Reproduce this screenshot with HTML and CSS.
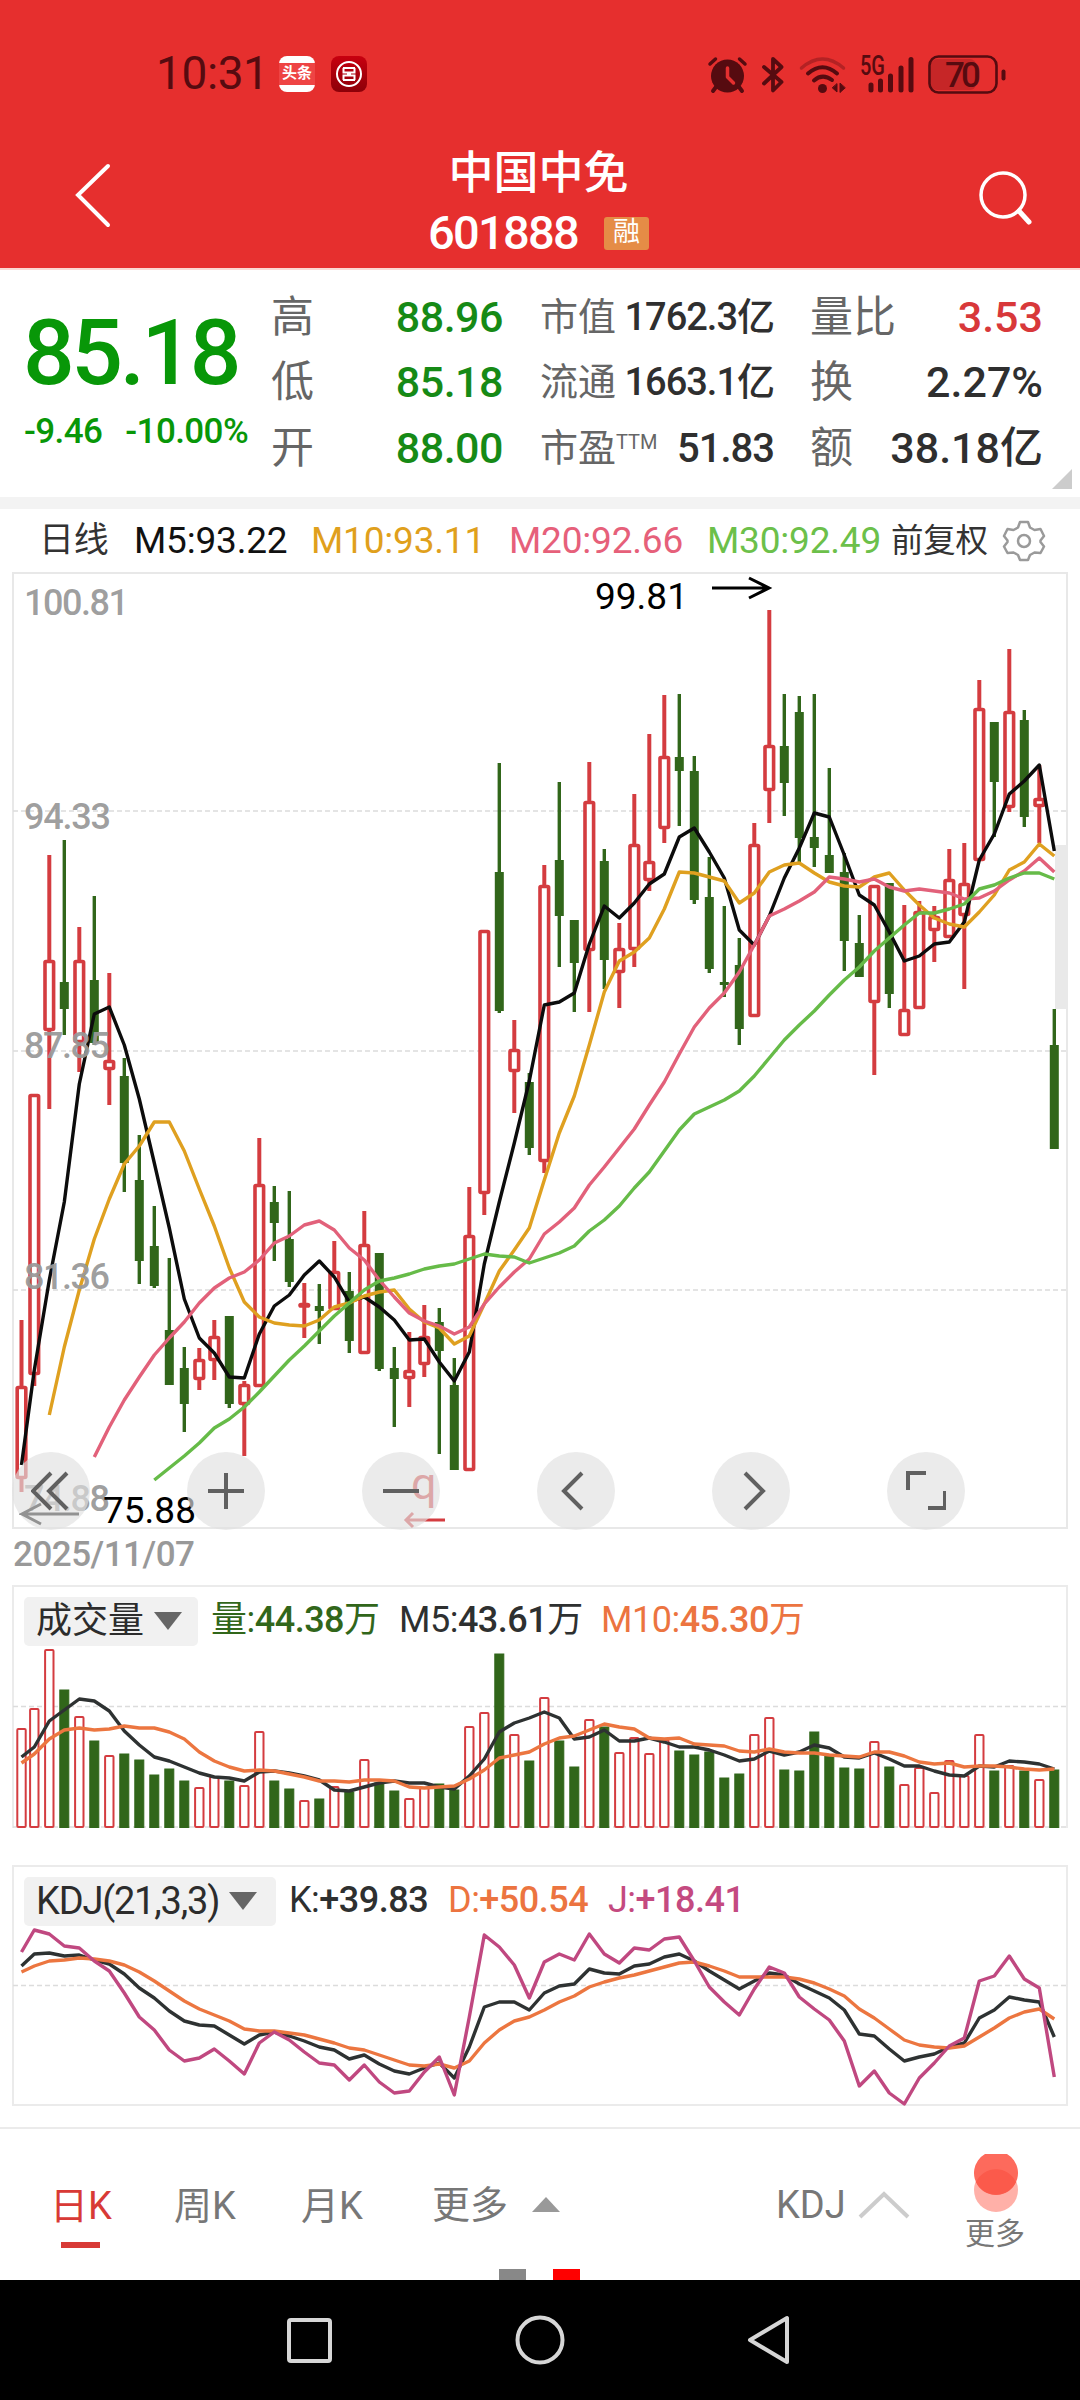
FILE: index.html
```html
<!DOCTYPE html>
<html lang="zh-CN">
<head>
    <meta charset="UTF-8">
    <meta name="viewport" content="width=device-width, initial-scale=1.0">
    <title>中国中免 601888</title>
    <link rel="stylesheet" href="styles.css">
</head>
<body>
    <div class="header">
        <!-- Phone status bar -->
        <div class="status-bar">
            <span class="clock">10:31</span>
            <span class="app-icon toutiao">头条</span>
            <span class="app-icon bank">
                <svg width="36" height="36" viewBox="0 0 36 36" fill="none" stroke="#fff" stroke-width="2">
                    <circle cx="18" cy="18" r="12"/>
                    <path d="M12 12H24M12 24H24M12.500 12V16.500H17V19.500H12.500V24M23.500 12V16.500H19V19.500H23.500V24"/>
                </svg>
            </span>
            <svg class="status-icons" width="320" height="55" viewBox="0 0 320 55">
                <g fill="#560b10" stroke="#560b10" stroke-linecap="round" stroke-linejoin="round">
                    <circle cx="27.500" cy="29" r="16.500" stroke="none"/>
                    <path d="M10 17L15.500 12M39.500 12L45 17" stroke-width="3.500"/>
                    <path d="M16 40L13 44M39 40L42 44" stroke-width="4"/>
                    <path d="M27.500 21V30L33.500 36" fill="none" stroke="#e52f2f" stroke-width="3.500"/>
                    <path d="M64 20L81.500 35L73 43.500V12L81.500 20L64 36.500" fill="none" stroke-width="3.800"/>
                    <path d="M101.500 21Q122.500 3 143.500 21" fill="none" stroke-width="3.500" opacity=".35"/>
                    <path d="M108 26.500Q122.500 14 137 26.500M114 33.500Q122.500 26 132 33" fill="none" stroke-width="4"/>
                    <circle cx="122.500" cy="41.500" r="4.500" stroke="none"/>
                    <path d="M137 37V45L132.500 41ZM140 36.500V45.500L145 41Z" stroke-width="1"/>
                    <path d="M171 38V43M180.500 34V43M190.500 29V43M201 21V43M211 12.500V43" stroke-width="5"/>
                    <rect x="231" y="12" width="45" height="31" rx="6" stroke="none" opacity=".22"/>
                    <rect x="229.500" y="9.500" width="67" height="36" rx="9" fill="none" stroke-width="2.600"/>
                    <path d="M303.500 24.500V31.500" stroke-width="4"/>
                </g>
                <text class="status-net" x="160" y="28" textLength="25" lengthAdjust="spacingAndGlyphs">5G</text>
                <text class="status-battery" x="245" y="40" textLength="36">70</text>
            </svg>
        </div>
        <!-- Title bar -->
        <div class="title-bar">
            <svg class="back" width="40" height="70" viewBox="0 0 40 70">
                <path d="M36 5L6 34L36 64" fill="none" stroke="#fff" stroke-width="4" stroke-linecap="round"/>
            </svg>
            <div class="stock">
                <div class="stock-name">中国中免</div>
                <div class="stock-code">601888 <span class="badge">融</span></div>
            </div>
            <svg class="search" width="56" height="60" viewBox="0 0 56 60">
                <circle cx="25" cy="26" r="22" fill="none" stroke="#fff" stroke-width="3.500"/>
                <path d="M41 42L51 53" stroke="#fff" stroke-width="5" stroke-linecap="round"/>
            </svg>
        </div>
    </div>

    <!-- Quote -->
    <div class="quote">
        <div class="price-box">
            <div class="price">85.18</div>
            <div class="change"><span>-9.46</span><span>-10.00%</span></div>
        </div>
        <div class="quote-col col-price">
            <div class="row"><span>高</span><b>88.96</b></div>
            <div class="row"><span>低</span><b>85.18</b></div>
            <div class="row"><span>开</span><b>88.00</b></div>
        </div>
        <div class="quote-col col-value">
            <div class="row"><span>市值</span><b>1762.3亿</b></div>
            <div class="row"><span>流通</span><b>1663.1亿</b></div>
            <div class="row"><span>市盈<sup>TTM</sup></span><b class="pe">51.83</b></div>
        </div>
        <div class="quote-col col-volume">
            <div class="row"><span>量比</span><b class="up">3.53</b></div>
            <div class="row"><span>换</span><b>2.27%</b></div>
            <div class="row"><span>额</span><b>38.18亿</b></div>
        </div>
        <div class="corner"></div>
    </div>

    <!-- Moving averages -->
    <div class="ma-bar">
        <span class="period">日线</span>
        <span class="ma5">M5:93.22</span>
        <span class="ma10">M10:93.11</span>
        <span class="ma20">M20:92.66</span>
        <span class="ma30">M30:92.49</span>
        <span class="adjust">前复权</span>
        <svg class="gear" width="44" height="44" viewBox="0 0 44 44" fill="none" stroke="#9a9a9a" stroke-width="2.500" stroke-linejoin="round">
            <path d="M18 3H26L28 8.500L32.500 11L38.500 10L42 17L38.500 21.500V23L42 27.500L38.500 34L32.500 33.500L28 36L26 41H18L16 36L11.500 33.500L5.500 34L2 27.500L5.500 23V21.500L2 17L5.500 10L11.500 11L16 8.500Z"/>
            <circle cx="22" cy="22" r="6"/>
        </svg>
    </div>

    <!-- Candle chart, drawn by chart.js -->
    <div class="kline">
        <svg id="kline" width="1080" height="960" viewBox="0 570 1080 960"></svg>
        <div class="controls">
            <div class="control"><svg width="40" height="40" viewBox="0 0 40 40"><path d="M20 2L2 20L20 38M36 2L18 20L36 38"/></svg></div>
            <div class="control"><svg width="40" height="40" viewBox="0 0 40 40"><path d="M2 20H38M20 2V38"/></svg></div>
            <div class="control"><svg width="40" height="40" viewBox="0 0 40 40"><path d="M2 20H38"/></svg></div>
            <div class="control"><svg width="40" height="40" viewBox="0 0 40 40"><path d="M26 2L8 20L26 38"/></svg></div>
            <div class="control"><svg width="40" height="40" viewBox="0 0 40 40"><path d="M14 2L32 20L14 38"/></svg></div>
            <div class="control"><svg width="40" height="40" viewBox="0 0 40 40"><path d="M2 19V2H20M22 37H39V20"/></svg></div>
        </div>
    </div>
    <div class="date">2025/11/07</div>

    <!-- Volume -->
    <div class="panel volume">
        <div class="legend">
            <span class="tag">成交量<i class="arrow-down"></i></span>
            <span class="vol">量:<b>44.38</b>万</span>
            <span class="dark">M5:<b>43.61</b>万</span>
            <span class="orange">M10:<b>45.30</b>万</span>
        </div>
        <svg id="volume" width="1080" height="182" viewBox="0 1646 1080 182"></svg>
    </div>

    <!-- KDJ -->
    <div class="panel kdj">
        <div class="legend">
            <span class="tag">KDJ(21,3,3)<i class="arrow-down"></i></span>
            <span class="dark">K:<b>+39.83</b></span>
            <span class="orange">D:<b>+50.54</b></span>
            <span class="magenta">J:<b>+18.41</b></span>
        </div>
        <svg id="kdj" width="1080" height="180" viewBox="0 1926 1080 180"></svg>
    </div>

    <!-- Period tabs -->
    <div class="tabs">
        <div class="tab active">日K</div>
        <div class="tab">周K</div>
        <div class="tab">月K</div>
        <div class="tab more">更多<i class="arrow-up"></i></div>
        <div class="indicator">KDJ
            <svg width="54" height="30" viewBox="0 0 54 30"><path d="M2 27L26 4L50 27" fill="none" stroke="#ccc" stroke-width="4"/></svg>
        </div>
        <div class="more-button">
            <svg width="50" height="62" viewBox="0 0 50 62">
                <path d="M3 38A22 22 0 0 1 47 38A22 22 0 0 1 3 38Z" fill="#ffb0a8"/>
                <path d="M14 2H36A22 22 0 1 1 14 2Z" fill="#fd6a5c"/>
                <path d="M5 30A22 22 0 0 1 45 30A22 22 0 0 1 5 30Z" fill="#fb5a4b"/>
            </svg>
            更多
        </div>
        <div class="dots"><i></i><i class="on"></i></div>
    </div>

    <div class="nav-bar">
        <svg width="1080" height="120" viewBox="0 0 1080 120" fill="none" stroke="#d6d6d6" stroke-width="4">
            <rect x="289" y="40" width="41" height="41" rx="2"/>
            <circle cx="540" cy="60" r="22.500"/>
            <path d="M787 38V82L750 60Z" stroke-linejoin="round"/>
        </svg>
    </div>

    <script src="chart.js"></script>
</body>
</html>
```
FILE: styles.css
```css
*,
*::before,
*::after {
    box-sizing: border-box;
}

body {
    width: 1080px;
    margin: 0;
    padding: 0;
    font-family: Roboto, "Noto Sans CJK SC", sans-serif;
    line-height: 1.2;
    background-color: #fff;
    color: #333;
    white-space: nowrap;
}

svg {
    display: block;
    flex-shrink: 0;
}

b {
    font-weight: 500;
}

/* Header */
.header {
    height: 270px;
    background-color: #e62f2e;
    border-bottom: 2px solid #fbd9d3;
    color: #fff;
}

.status-bar {
    display: flex;
    align-items: center;
    height: 148px;
    padding-left: 156px;
}

.clock {
    width: 123px;
    font-size: 46px;
    letter-spacing: -.4px;
    color: #560b10;
}

.app-icon {
    width: 36px;
    height: 36px;
    border-radius: 8px;
    overflow: hidden;
}

.toutiao {
    margin-right: 16px;
    background: linear-gradient(#fff 20%, #e44 20%, #e44 80%, #fff 80%);
    font-size: 15px;
    font-weight: bold;
    line-height: 34px;
    text-align: center;
}

.bank {
    background: linear-gradient(#c8000f, #8c0008);
}

.status-icons {
    margin-left: 333px;
}

.status-net {
    font-size: 27px;
    font-weight: 500;
    fill: #560b10;
}

.status-battery {
    font-size: 35px;
    font-weight: 500;
    fill: #560b10;
}

.title-bar {
    display: flex;
    justify-content: space-between;
    padding: 0 46px 0 72px;
    height: 120px;
}

.back {
    margin-top: 13px;
}

.search {
    margin-top: 21px;
}

.stock {
    margin-left: -13px;
    text-align: center;
}

.stock-name {
    height: 54px;
    font-size: 45px;
    font-weight: 500;
    line-height: 52px;
}

.stock-code {
    display: flex;
    align-items: center;
    justify-content: center;
    height: 62px;
    font-size: 47px;
    font-weight: 500;
    letter-spacing: -1.7px;
}

.badge {
    width: 45px;
    height: 33px;
    margin-left: 26px;
    border-radius: 3px;
    background-color: #e58c46;
    font-size: 27px;
    font-weight: 400;
    line-height: 31px;
    letter-spacing: 0;
}

/* Quote */
.quote {
    position: relative;
    display: flex;
    height: 239px;
    padding-top: 15px;
    border-bottom: 12px solid #f3f3f3;
}

.price-box {
    width: 271px;
    color: #089708;
}

.price {
    height: 112px;
    padding-left: 23px;
    font-size: 91px;
    font-weight: 500;
    line-height: 136px;
    letter-spacing: -3.4px;
}

.change {
    display: flex;
    gap: 23px;
    padding-left: 24px;
    font-size: 35px;
    font-weight: 500;
    line-height: 70px;
    letter-spacing: -.6px;
}

.quote-col .row {
    display: flex;
    justify-content: space-between;
    align-items: center;
    height: 65.5px;
    font-size: 43px;
    color: #666;
}

.quote-col b {
    color: #2f2f2f;
}

.col-price {
    width: 232px;
    margin-right: 37px;
}

.quote .col-price b {
    letter-spacing: -.5px;
    color: #168a16;
}

.quote-col.col-value {
    width: 234px;
    margin-right: 36px;
}

.col-value .row {
    font-size: 38px;
}

.col-value b {
    font-size: 38px;
    letter-spacing: -1px;
}

.col-value sup {
    font-size: 20px;
    line-height: 0;
    vertical-align: 12px;
}

.col-value .pe {
    font-size: 40px;
}

.col-volume {
    width: 233px;
}

.quote .col-volume .up {
    color: #d8383a;
}

.corner {
    position: absolute;
    right: 8px;
    bottom: 8px;
    border-left: 20px solid transparent;
    border-bottom: 20px solid #ccc;
}

/* Moving averages */
.ma-bar {
    display: flex;
    align-items: center;
    height: 61px;
    padding: 3px 0 0 39px;
    font-size: 37px;
    letter-spacing: -.2px;
}

.period {
    width: 95px;
    font-size: 35px;
}

.ma5 {
    width: 177px;
    color: #111;
}

.ma10 {
    width: 198px;
    color: #e0a01c;
}

.ma20 {
    width: 198px;
    color: #e6607a;
}

.ma30 {
    width: 184px;
    color: #6cc04a;
}

.adjust {
    width: 111px;
    font-size: 32.5px;
}

/* Candle chart */
.kline {
    position: relative;
    height: 960px;
}

.controls {
    position: absolute;
    left: 12px;
    bottom: 0;
    display: flex;
    gap: 97px;
}

.control {
    display: flex;
    align-items: center;
    justify-content: center;
    width: 78px;
    height: 78px;
    border-radius: 50%;
    background-color: rgba(224, 224, 224, .65);
}

.control path {
    fill: none;
    stroke: #606060;
    stroke-width: 4;
}

.axis {
    font-size: 36px;
    font-weight: 500;
    fill: #999;
    fill-opacity: .95;
}

.mark {
    font-size: 37px;
    fill: #000;
}

.date {
    height: 55px;
    padding-left: 13px;
    font-size: 35px;
    font-weight: 500;
    line-height: 49px;
    letter-spacing: -.5px;
    color: #999;
}

/* Volume and KDJ panels */
.panel {
    position: relative;
}

.panel::before {
    content: "";
    position: absolute;
    left: 12px;
    top: 0;
    width: 1056px;
    height: 100%;
    border: 2px solid #ebebeb;
}

.volume {
    height: 243px;
    margin-bottom: 37px;
}

.volume::before {
    border-bottom: 0;
}

.kdj {
    height: 241px;
}

.legend {
    position: relative;
    display: flex;
    align-items: center;
    height: 61px;
    padding: 11px 0 0 24px;
    font-size: 36px;
    letter-spacing: -.5px;
}

.tag {
    display: flex;
    align-items: center;
    width: 174px;
    height: 49px;
    padding: 0 0 0 12px;
    border-radius: 5px;
    background-color: #f1f1f1;
    font-size: 36px;
    line-height: 44px;
    letter-spacing: 0;
    color: #2c2c2c;
}

.arrow-down {
    margin-left: 10px;
    border: 14px solid transparent;
    border-top: 18px solid #666;
    border-bottom: 0;
}

.vol {
    width: 188px;
    margin-left: 13px;
    color: #31661a;
}

.dark {
    width: 202px;
    color: #2e3030;
}

.orange {
    color: #ec7440;
}

.magenta {
    color: #c44a80;
}

.kdj .tag {
    width: 252px;
    font-size: 38px;
    line-height: 48px;
    letter-spacing: -1.2px;
}

.kdj .dark {
    width: 159px;
    margin-left: 13px;
}

.kdj .orange {
    width: 160px;
}

.panel svg {
    position: relative;
}

.candle-up {
    fill: #fff;
    stroke: #d43c40;
}

.candle-down {
    fill: #31661a;
    stroke: #31661a;
}

.line {
    fill: none;
    stroke-width: 3.4;
    stroke-linejoin: round;
}

.grid {
    stroke: #dcdcdc;
    stroke-width: 1.3;
    stroke-dasharray: 5 3;
}

/* Tabs */
.tabs {
    position: relative;
    display: flex;
    height: 153px;
    margin-top: 21px;
    border-top: 2px solid #ebebeb;
    font-size: 38px;
    line-height: 154px;
    color: #777;
}

.tab {
    position: relative;
    width: 126px;
    padding-left: 50px;
}

.tab:nth-child(2) {
    padding-left: 48px;
}

.tab:nth-child(3) {
    padding-left: 49px;
}

.tab.active {
    color: #d83a36;
}

.tab.active::after {
    content: "";
    position: absolute;
    left: 61px;
    top: 113px;
    width: 39px;
    height: 6px;
    background-color: #d83a36;
}

.tab.more {
    display: flex;
    align-items: center;
    width: 398px;
    padding-left: 54px;
}

.arrow-up {
    margin-left: 24px;
    border: 14px solid transparent;
    border-top: 0;
    border-bottom: 15px solid #999;
}

.indicator {
    display: flex;
    align-items: center;
    gap: 12px;
    width: 189px;
}

.more-button {
    width: 62px;
    padding-top: 23px;
    font-size: 30px;
    line-height: 40px;
}

.more-button svg {
    margin: 0 auto;
}

.dots {
    position: absolute;
    left: 499px;
    bottom: 0;
    display: flex;
    gap: 27px;
}

.dots i {
    width: 27px;
    height: 11px;
    background-color: #888;
}

.dots .on {
    background-color: #f00;
}

.nav-bar {
    height: 120px;
    background-color: #000;
}
```
FILE: chart.js
```js
// [direction, high, body top, body bottom, low]
const candles = [
    ['u', 1320, 1386, 1479, 1492], ['u', 1094, 1094, 1375, 1386], ['u', 855, 960, 1031, 1109],
    ['d', 840, 982, 1009, 1035], ['u', 927, 960, 1043, 1072], ['d', 896, 980, 1043, 1045],
    ['u', 973, 1060, 1070, 1105], ['d', 1058, 1076, 1163, 1192], ['d', 1135, 1180, 1261, 1284],
    ['d', 1206, 1246, 1286, 1288], ['d', 1258, 1330, 1385, 1385], ['d', 1347, 1368, 1404, 1432],
    ['u', 1348, 1359, 1380, 1390], ['u', 1320, 1336, 1361, 1380], ['d', 1316, 1316, 1404, 1408],
    ['u', 1381, 1384, 1405, 1456], ['u', 1138, 1184, 1387, 1387], ['d', 1186, 1202, 1223, 1261],
    ['d', 1191, 1239, 1282, 1287], ['u', 1283, 1303, 1307, 1338], ['d', 1284, 1306, 1311, 1344],
    ['u', 1241, 1271, 1310, 1310], ['d', 1272, 1291, 1341, 1353], ['u', 1211, 1244, 1354, 1354],
    ['d', 1253, 1253, 1369, 1371], ['d', 1347, 1368, 1379, 1427], ['u', 1332, 1370, 1379, 1407],
    ['u', 1305, 1336, 1365, 1377], ['d', 1308, 1322, 1351, 1454], ['d', 1358, 1385, 1470, 1470],
    ['u', 1187, 1235, 1471, 1471], ['u', 930, 930, 1194, 1215], ['d', 763, 872, 1011, 1013],
    ['u', 1020, 1049, 1072, 1113], ['d', 1073, 1082, 1148, 1155], ['u', 865, 885, 1162, 1173],
    ['d', 782, 860, 916, 967], ['d', 920, 920, 963, 1012], ['u', 762, 801, 951, 1012],
    ['d', 849, 861, 960, 989], ['u', 923, 948, 973, 1008], ['u', 794, 844, 950, 967],
    ['u', 734, 861, 881, 891], ['u', 695, 756, 829, 843], ['d', 694, 757, 771, 826],
    ['d', 756, 771, 900, 904], ['d', 857, 897, 969, 973], ['d', 906, 982, 985, 997],
    ['d', 938, 965, 1029, 1045], ['u', 823, 844, 1017, 1017], ['u', 610, 745, 791, 823],
    ['d', 694, 746, 783, 816], ['d', 696, 712, 838, 863], ['d', 694, 837, 848, 867],
    ['d', 768, 855, 873, 873], ['d', 853, 872, 941, 971], ['d', 915, 943, 977, 977],
    ['u', 885, 885, 1003, 1075], ['d', 883, 883, 994, 1008], ['u', 905, 1009, 1036, 1036],
    ['u', 901, 911, 1009, 1009], ['u', 906, 916, 931, 962], ['u', 849, 879, 938, 938],
    ['u', 843, 883, 916, 989], ['u', 680, 708, 861, 861], ['d', 722, 722, 782, 837],
    ['u', 649, 711, 808, 812], ['d', 710, 720, 817, 827], ['u', 765, 798, 807, 843],
    ['d', 1009, 1045, 1149, 1149]
];

const volumes = [
    1729, 1709, 1650, 1690, 1717, 1741, 1756, 1754, 1760, 1775, 1769, 1781, 1788, 1777, 1781, 1786, 1732, 1781,
    1789, 1801, 1799, 1787, 1792, 1760, 1783, 1791, 1799, 1788, 1784, 1790, 1727, 1713, 1654, 1735, 1761, 1698,
    1741, 1767, 1720, 1727, 1753, 1738, 1754, 1740, 1751, 1755, 1752, 1778, 1774, 1735, 1718, 1770, 1771, 1732,
    1756, 1768, 1769, 1742, 1767, 1785, 1768, 1793, 1761, 1776, 1735, 1771, 1766, 1771, 1780, 1770
];

// Lines start at the candle given by "from"
const priceLines = [
    { color: '#0c0c0c', from: 0, y: [
        1465, 1370, 1280, 1202, 1084, 1014, 1007, 1045, 1099, 1163, 1228, 1299, 1338, 1353, 1377, 1378, 1334, 1306,
        1295, 1275, 1261, 1277, 1302, 1297, 1307, 1320, 1340, 1339, 1362, 1381, 1352, 1264, 1202, 1143, 1081, 1005,
        1002, 993, 944, 906, 918, 903, 884, 874, 837, 828, 852, 878, 930, 945, 916, 878, 848, 813, 817, 855, 895,
        905, 932, 961, 956, 944, 942, 922, 860, 834, 794, 781, 765, 851] },
    { color: '#dfa020', from: 2, y: [
        1415, 1347, 1290, 1239, 1199, 1164, 1146, 1122, 1122, 1151, 1189, 1226, 1268, 1302, 1317, 1323, 1325, 1326,
        1320, 1307, 1303, 1296, 1292, 1290, 1309, 1322, 1328, 1344, 1336, 1304, 1271, 1250, 1228, 1180, 1133, 1096,
        1045, 992, 961, 952, 938, 909, 872, 873, 877, 881, 903, 893, 872, 865, 863, 873, 882, 886, 887, 877, 873,
        890, 905, 918, 924, 927, 912, 895, 870, 862, 844, 856] },
    { color: '#e2617a', from: 5, y: [
        1457, 1427, 1400, 1377, 1355, 1338, 1322, 1303, 1288, 1278, 1272, 1260, 1243, 1236, 1225, 1221, 1230, 1248,
        1260, 1280, 1297, 1313, 1321, 1326, 1334, 1327, 1304, 1287, 1272, 1259, 1234, 1222, 1208, 1185, 1167, 1148,
        1129, 1105, 1082, 1054, 1027, 1008, 993, 972, 945, 916, 909, 901, 892, 877, 879, 882, 879, 887, 891, 889,
        891, 893, 899, 898, 891, 880, 871, 858, 872] },
    { color: '#66bb48', from: 9, y: [
        1480, 1468, 1456, 1443, 1428, 1419, 1407, 1392, 1376, 1360, 1346, 1331, 1316, 1303, 1290, 1281, 1278, 1274,
        1269, 1266, 1264, 1259, 1254, 1256, 1257, 1263, 1258, 1253, 1246, 1231, 1220, 1206, 1188, 1172, 1151, 1130,
        1114, 1107, 1100, 1091, 1076, 1058, 1040, 1025, 1011, 995, 980, 967, 951, 938, 925, 913, 913, 909, 904,
        889, 885, 878, 873, 873, 879] }
];

const volumeLines = [
    { color: '#2e3232', from: 0, y: [
        1757, 1747, 1721, 1710, 1699, 1701, 1711, 1731, 1745, 1757, 1761, 1767, 1773, 1777, 1778, 1781, 1772, 1771,
        1773, 1776, 1780, 1790, 1791, 1787, 1783, 1781, 1783, 1783, 1787, 1789, 1776, 1759, 1732, 1723, 1718, 1712,
        1718, 1739, 1737, 1730, 1741, 1741, 1738, 1742, 1747, 1747, 1750, 1755, 1761, 1759, 1751, 1755, 1752, 1745,
        1748, 1757, 1758, 1753, 1759, 1766, 1766, 1771, 1775, 1776, 1766, 1767, 1761, 1762, 1764, 1769] },
    { color: '#ec7640', from: 0, y: [
        1763, 1754, 1739, 1730, 1728, 1730, 1729, 1726, 1728, 1728, 1732, 1739, 1752, 1761, 1767, 1771, 1770, 1771,
        1774, 1777, 1781, 1781, 1782, 1780, 1780, 1781, 1787, 1788, 1787, 1786, 1779, 1770, 1758, 1755, 1752, 1744,
        1738, 1736, 1730, 1724, 1727, 1729, 1738, 1739, 1738, 1744, 1745, 1746, 1751, 1752, 1749, 1752, 1753, 1753,
        1755, 1756, 1757, 1752, 1752, 1756, 1762, 1764, 1763, 1767, 1766, 1766, 1767, 1769, 1770, 1769] }
];

const kdjLines = [
    { color: '#2e3232', from: 0, y: [
        1966, 1954, 1953, 1956, 1955, 1960, 1964, 1974, 1988, 1998, 2011, 2021, 2025, 2026, 2035, 2044, 2035, 2032,
        2036, 2041, 2047, 2050, 2059, 2055, 2064, 2071, 2074, 2068, 2063, 2078, 2047, 2007, 2002, 2002, 2010, 1993,
        1986, 1984, 1969, 1973, 1974, 1966, 1964, 1957, 1954, 1961, 1971, 1980, 1989, 1981, 1973, 1975, 1984, 1991,
        1998, 2010, 2034, 2036, 2049, 2061, 2057, 2054, 2047, 2043, 2018, 2010, 1997, 2000, 2002, 2037] },
    { color: '#ec7640', from: 0, y: [
        1972, 1966, 1961, 1960, 1958, 1959, 1961, 1965, 1972, 1981, 1991, 2001, 2009, 2015, 2021, 2029, 2031, 2031,
        2033, 2035, 2039, 2043, 2048, 2050, 2055, 2060, 2065, 2066, 2064, 2068, 2061, 2043, 2030, 2021, 2017, 2010,
        2002, 1996, 1987, 1982, 1978, 1975, 1971, 1967, 1963, 1962, 1966, 1971, 1977, 1977, 1977, 1977, 1979, 1983,
        1989, 1996, 2009, 2018, 2029, 2040, 2045, 2047, 2048, 2046, 2037, 2028, 2018, 2012, 2009, 2019] },
    { color: '#c04880', from: 0, y: [
        1952, 1930, 1934, 1946, 1948, 1961, 1971, 1993, 2017, 2030, 2050, 2061, 2058, 2049, 2061, 2074, 2043, 2032,
        2040, 2052, 2063, 2065, 2080, 2065, 2082, 2093, 2091, 2072, 2057, 2095, 2017, 1935, 1947, 1965, 1998, 1962,
        1954, 1960, 1934, 1954, 1963, 1948, 1950, 1939, 1937, 1961, 1987, 2002, 2015, 1989, 1967, 1973, 1997, 2009,
        2020, 2041, 2086, 2071, 2093, 2104, 2078, 2063, 2046, 2038, 1981, 1976, 1956, 1979, 1988, 2077] }
];

function xAt(i) {
    return i === 0 ? 21.5 : 19.3 + i * 15;
}

function gridLine(y) {
    return `<line class="grid" x1="13" x2="1067" y1="${y}" y2="${y}"/>`;
}

function drawLines(lines) {
    return lines.map(line => {
        const points = line.y.map((y, i) => `${xAt(line.from + i)},${y}`).join(' ');
        return `<polyline class="line" stroke="${line.color}" points="${points}"/>`;
    }).join('');
}

function drawCandle([dir, high, top, bottom, low], i) {
    const x = xAt(i);
    if (dir === 'u') {
        const h = Math.max(bottom - top - 3, 1.5);
        return `<g class="candle-up" stroke-width="3.6"><path d="M${x} ${high}V${low}" stroke-width="4"/>` +
            `<rect x="${x - 4.3}" y="${top + 1.5}" width="8.6" height="${h}" rx="1"/></g>`;
    }
    return `<g class="candle-down"><path d="M${x} ${high}V${low}" stroke-width="3.4"/>` +
        `<rect x="${x - 4.5}" y="${top}" width="9" height="${bottom - top}" stroke="none"/></g>`;
}

function drawVolume(top, i) {
    const x = xAt(i);
    if (candles[i][0] === 'u') {
        return `<rect class="candle-up" x="${x - 4.2}" y="${top}" width="8.4" height="${1827 - top}" rx="1" stroke-width="2"/>`;
    }
    return `<rect class="candle-down" stroke="none" x="${x - 4.5}" y="${top}" width="9" height="${1828 - top}"/>`;
}

function axisText(text, x, y, width) {
    return `<text class="axis" x="${x}" y="${y}" textLength="${width}">${text}</text>`;
}

document.getElementById('kline').innerHTML =
    '<rect x="13" y="573" width="1054" height="955" fill="none" stroke="#e8e8e8" stroke-width="2"/>' +
    gridLine(811) + gridLine(1051) + gridLine(1290) +
    '<rect x="1055" y="845" width="13" height="164" fill="#e9e9e9"/>' +
    candles.map(drawCandle).join('') +
    drawLines(priceLines) +
    axisText('100.81', 24, 615, 105) +
    axisText('94.33', 24, 829, 87) +
    axisText('87.85', 24, 1058, 86) +
    axisText('81.36', 24, 1289, 86) +
    axisText('74.88', 24, 1511, 86) +
    '<text class="mark" x="595" y="609">99.81</text>' +
    '<path d="M712 588H768M749 578L769 588L749 598" fill="none" stroke="#000" stroke-width="3"/>' +
    '<text class="mark" x="103" y="1523">75.88</text>' +
    '<path d="M79 1514H22M41 1504L22 1514L41 1524" fill="none" stroke="#000" stroke-width="3"/>' +
    '<text x="411" y="1499" font-size="45" fill="#d43c40">q</text>' +
    '<path d="M445 1520H406M413 1513L406 1520L413 1527" fill="none" stroke="#d43c40" stroke-width="3"/>';

document.getElementById('volume').innerHTML =
    gridLine(1706.5) + gridLine(1827) + volumes.map(drawVolume).join('') + drawLines(volumeLines);

document.getElementById('kdj').innerHTML = gridLine(1985.5) + drawLines(kdjLines);
```
